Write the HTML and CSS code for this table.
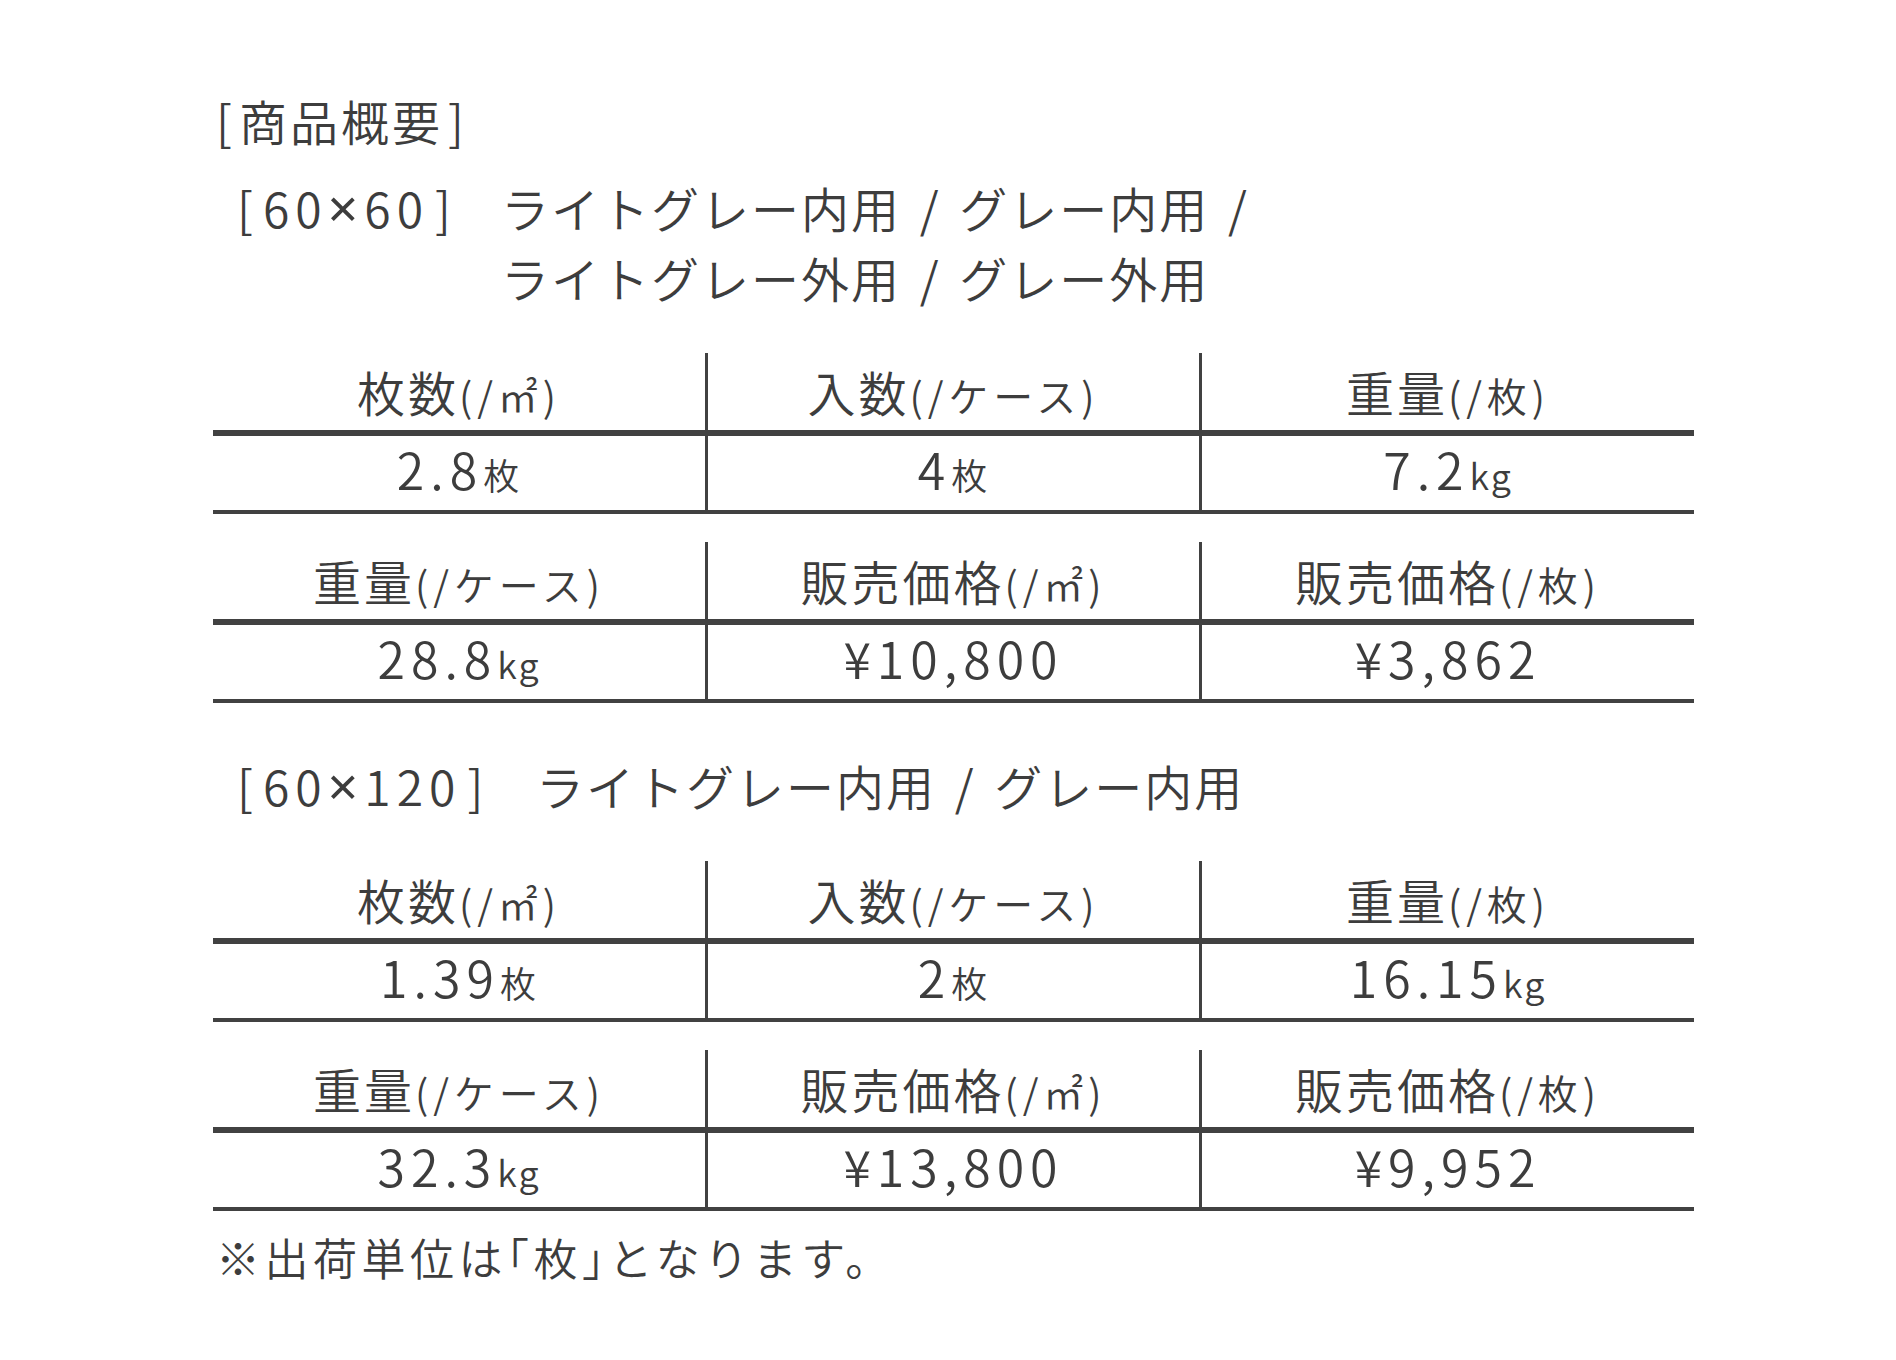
FILE: index.html
```html
<!DOCTYPE html>
<html lang="ja">
<head>
<meta charset="utf-8">
<title>商品概要</title>
<link rel="stylesheet" href="styles.css">
</head>
<body>
<div class="page">
  <h1 class="title"><span class="lb">[</span>商品概要<span class="rb">]</span></h1>

  <div class="heading h1">
    <div class="label"><span class="lb">[</span><span class="num">60<span class="x">×</span>60</span><span class="rb">]</span></div>
    <div class="names">
      <div>ライトグレー内用 / グレー内用 /</div>
      <div>ライトグレー外用 / グレー外用</div>
    </div>
  </div>

  <div class="spec s1">
    <div class="th">枚数<span class="paren">(/㎡)</span></div>
    <div class="th">入数<span class="paren">(/ケース)</span></div>
    <div class="th">重量<span class="paren">(/枚)</span></div>
    <div class="td"><span class="val">2.8</span><span class="unit">枚</span></div>
    <div class="td"><span class="val">4</span><span class="unit">枚</span></div>
    <div class="td"><span class="val">7.2</span><span class="unit">kg</span></div>
  </div>

  <div class="spec s2">
    <div class="th">重量<span class="paren">(/ケース)</span></div>
    <div class="th">販売価格<span class="paren">(/㎡)</span></div>
    <div class="th">販売価格<span class="paren">(/枚)</span></div>
    <div class="td"><span class="val">28.8</span><span class="unit">kg</span></div>
    <div class="td"><span class="val">¥10,800</span></div>
    <div class="td"><span class="val">¥3,862</span></div>
  </div>

  <div class="heading h2">
    <div class="label"><span class="lb">[</span><span class="num">60<span class="x">×</span>120</span><span class="rb">]</span></div>
    <div class="names">
      <div>ライトグレー内用 / グレー内用</div>
    </div>
  </div>

  <div class="spec s3">
    <div class="th">枚数<span class="paren">(/㎡)</span></div>
    <div class="th">入数<span class="paren">(/ケース)</span></div>
    <div class="th">重量<span class="paren">(/枚)</span></div>
    <div class="td"><span class="val">1.39</span><span class="unit">枚</span></div>
    <div class="td"><span class="val">2</span><span class="unit">枚</span></div>
    <div class="td"><span class="val">16.15</span><span class="unit">kg</span></div>
  </div>

  <div class="spec s4">
    <div class="th">重量<span class="paren">(/ケース)</span></div>
    <div class="th">販売価格<span class="paren">(/㎡)</span></div>
    <div class="th">販売価格<span class="paren">(/枚)</span></div>
    <div class="td"><span class="val">32.3</span><span class="unit">kg</span></div>
    <div class="td"><span class="val">¥13,800</span></div>
    <div class="td"><span class="val">¥9,952</span></div>
  </div>

  <p class="note">※出荷単位は<span class="kb">「</span>枚<span class="kb">」</span>となります。</p>
</div>
</body>
</html>
```

FILE: styles.css
```css
html, body {
  margin: 0;
  padding: 0;
  background: #ffffff;
}

body {
  font-family: "Noto Sans CJK JP DemiLight", "Noto Sans CJK JP", "Noto Sans", sans-serif;
  font-weight: 400;
  color: #3d3d3d;
}

.page {
  width: 1481px;
  padding: 90px 0 0 213px;
}

.title {
  margin: 0 0 0 3px;
  font-size: 48px;
  font-weight: 400;
  line-height: 60px;
  letter-spacing: 3px;
  height: 60px;
}

.title .lb {
  margin-right: 4px;
}

.title .rb {
  margin-left: 5px;
}

.heading {
  display: flex;
  font-size: 48px;
  line-height: 70px;
  letter-spacing: 2px;
  word-spacing: 6px;
  padding-left: 24px;
}

.heading .label {
  width: 264px;
  flex: none;
}

.heading .lb {
  margin-right: 8px;
}

.heading .rb {
  margin-left: 6px;
}

.heading .num {
  letter-spacing: 6px;
}

.heading .x {
  font-family: "Noto Sans", sans-serif;
  font-size: 1.12em;
  line-height: 1;
}

.h1 {
  margin-top: 22px;
}

.h2 {
  margin-top: 47px;
}

.h2 .label {
  width: 299px;
}

.spec {
  display: grid;
  grid-template-columns: 492px 494px 495px;
}

.s1 {
  margin-top: 41px;
}

.s2 {
  margin-top: 28px;
}

.s3 {
  margin-top: 41px;
}

.s4 {
  margin-top: 28px;
}

.th, .td {
  display: flex;
  align-items: baseline;
  justify-content: center;
  box-sizing: border-box;
  line-height: 1;
}

.th {
  height: 83px;
  border-bottom: 6px solid #414141;
  font-size: 48px;
  letter-spacing: 3px;
  padding-top: 14px;
}

.td {
  height: 78px;
  border-bottom: 4px solid #414141;
  padding-top: 7px;
}

.th:nth-child(3n+2), .th:nth-child(3n+3),
.td:nth-child(3n+2), .td:nth-child(3n+3) {
  border-left: 3px solid #414141;
}

.paren {
  font-size: 40px;
  letter-spacing: 5px;
}

.val {
  font-size: 50px;
  letter-spacing: 6px;
}

.unit {
  font-size: 36px;
  letter-spacing: 2px;
}

.note {
  margin: 16px 0 0 3px;
  font-size: 44px;
  line-height: 60px;
  letter-spacing: 4.5px;
}

.note .kb {
  font-feature-settings: "halt";
}
```
